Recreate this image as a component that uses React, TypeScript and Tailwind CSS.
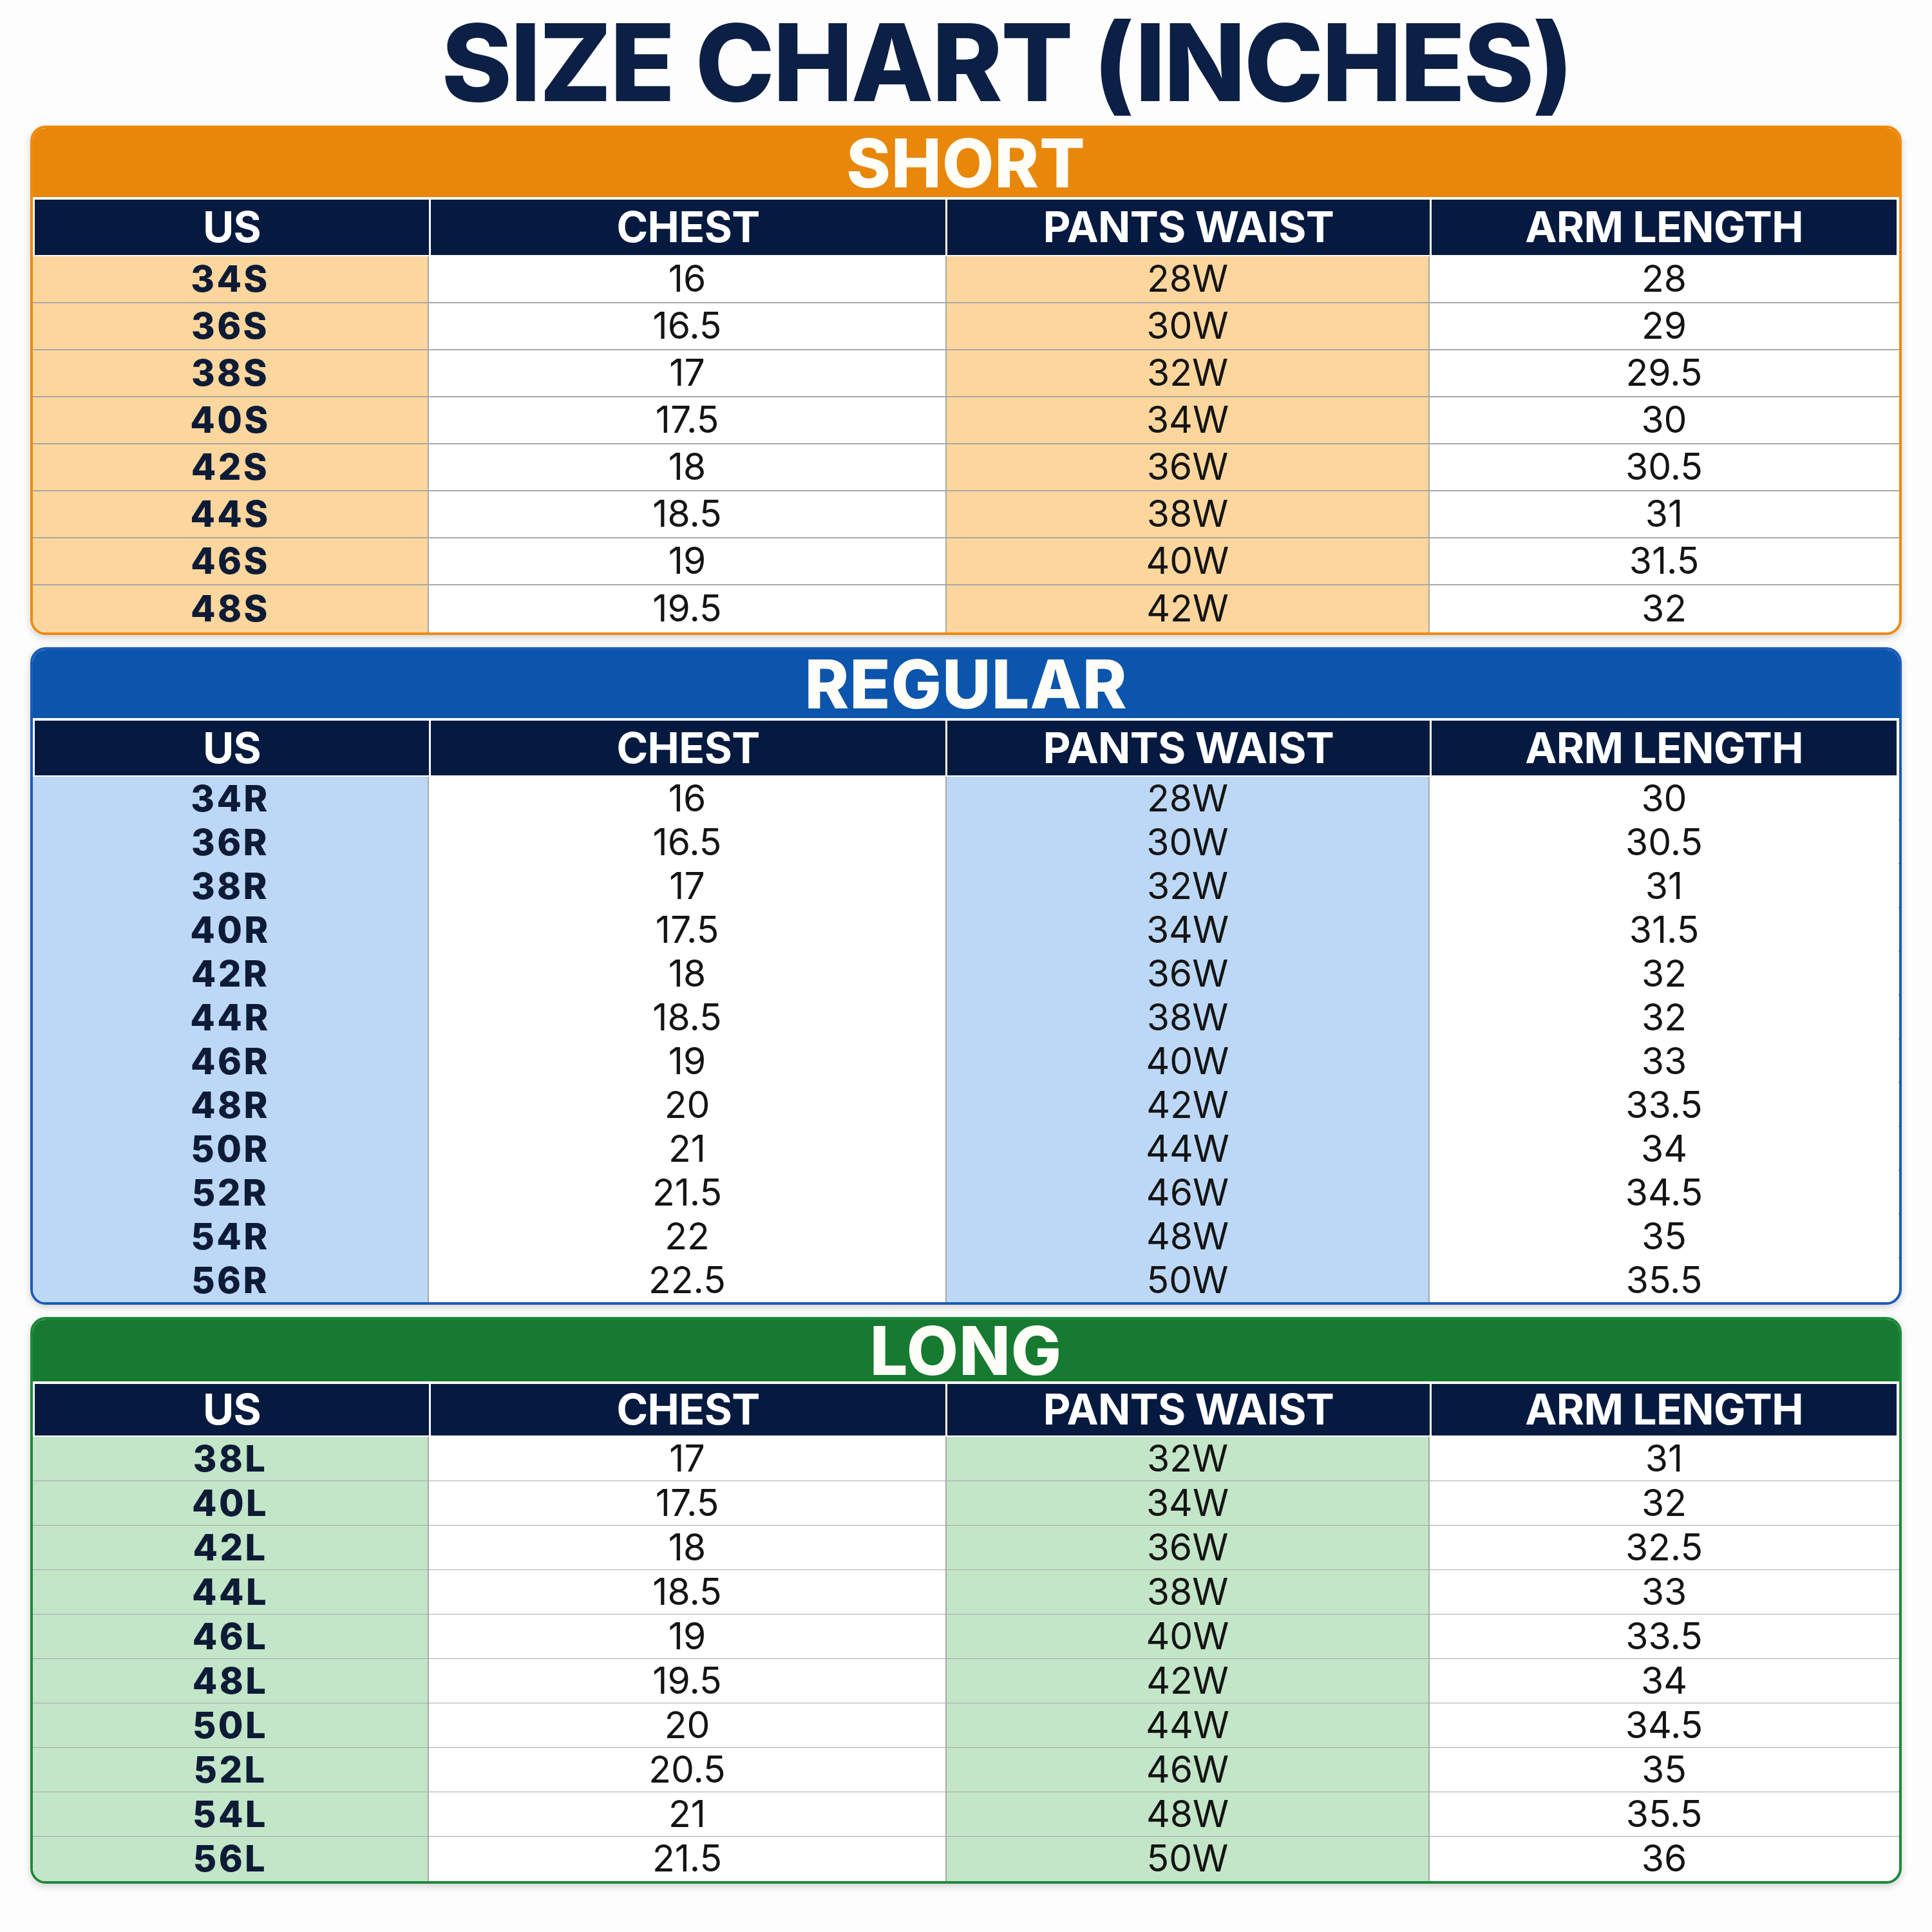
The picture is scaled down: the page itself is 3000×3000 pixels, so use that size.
import React from "react";

type Row = [string, string, string, string];

const sections = [
  {
    name: "SHORT",
    card: "border-[#ee8a0c]",
    band: "bg-[#e8870a] h-[107px]",
    tint: "bg-[#fdd69d]",
    headerH: "h-[86px]",
    rowH: "h-[73px]",
    rows: [
      ["34S", "16", "28W", "28"],
      ["36S", "16.5", "30W", "29"],
      ["38S", "17", "32W", "29.5"],
      ["40S", "17.5", "34W", "30"],
      ["42S", "18", "36W", "30.5"],
      ["44S", "18.5", "38W", "31"],
      ["46S", "19", "40W", "31.5"],
      ["48S", "19.5", "42W", "32"],
    ] as Row[],
  },
  {
    name: "REGULAR",
    card: "border-[#1a5cb8]",
    band: "bg-[#0c55ad] h-[106px]",
    tint: "bg-[#bcd8f6]",
    headerH: "h-[85px]",
    rowH: "h-[68px]",
    rows: [
      ["34R", "16", "28W", "30"],
      ["36R", "16.5", "30W", "30.5"],
      ["38R", "17", "32W", "31"],
      ["40R", "17.5", "34W", "31.5"],
      ["42R", "18", "36W", "32"],
      ["44R", "18.5", "38W", "32"],
      ["46R", "19", "40W", "33"],
      ["48R", "20", "42W", "33.5"],
      ["50R", "21", "44W", "34"],
      ["52R", "21.5", "46W", "34.5"],
      ["54R", "22", "48W", "35"],
      ["56R", "22.5", "50W", "35.5"],
    ] as Row[],
  },
  {
    name: "LONG",
    card: "border-[#1d8a3a]",
    band: "bg-[#167a31] h-[96px]",
    tint: "bg-[#c3e5c8]",
    headerH: "h-[80px]",
    rowH: "h-[69px]",
    rows: [
      ["38L", "17", "32W", "31"],
      ["40L", "17.5", "34W", "32"],
      ["42L", "18", "36W", "32.5"],
      ["44L", "18.5", "38W", "33"],
      ["46L", "19", "40W", "33.5"],
      ["48L", "19.5", "42W", "34"],
      ["50L", "20", "44W", "34.5"],
      ["52L", "20.5", "46W", "35"],
      ["54L", "21", "48W", "35.5"],
      ["56L", "21.5", "50W", "36"],
    ] as Row[],
  },
];

const cols = "grid grid-cols-[615px_802px_752px_728px]";
const headers = ["US", "CHEST", "PANTS WAIST", "ARM LENGTH"];

function Section({ s }: { s: (typeof sections)[number] }) {
  return (
    <section
      className={`rounded-[24px] border-[4px] bg-white shadow-[0_4px_12px_rgba(0,0,0,0.18)] ${s.card}`}
    >
      <div className={`flex items-center justify-center rounded-t-[20px] ${s.band}`}>
        <h2 className="my-[-13px] text-[104px] leading-[1.25] font-extrabold tracking-[0.01em] text-[#fffdf7]">
          {s.name}
        </h2>
      </div>
      <div className={`${cols} bg-white pt-[4px] pb-[2px]`}>
        {headers.map((h, i) => (
          <div
            key={h}
            className={`flex items-center justify-center border-l-[3px] border-white bg-[#061a40] bg-clip-padding text-[66px] leading-[1.2] font-bold tracking-[-0.01em] text-white ${s.headerH} ${i === 3 ? "border-r-[3px]" : ""}`}
          >
            {h}
          </div>
        ))}
      </div>
      <div>
        {s.rows.map((r, i) => {
          const last = i === s.rows.length - 1;
          return (
            <div
              key={r[0]}
              className={`${cols} ${s.rowH} ${last ? "" : "border-b-2 border-[#a8a8a8]"}`}
            >
              <div
                className={`flex items-center justify-center border-r-2 border-[#a8a8a8] text-[56px] leading-[1.2] font-extrabold tracking-[0.06em] text-[#0d1b36] ${s.tint} ${last ? "rounded-bl-[20px]" : ""}`}
              >
                {r[0]}
              </div>
              <div className="flex items-center justify-center bg-white text-[57px] leading-[1.2] text-[#141414]">
                {r[1]}
              </div>
              <div
                className={`flex items-center justify-center border-x-2 border-[#a8a8a8] text-[57px] leading-[1.2] text-[#141414] ${s.tint}`}
              >
                {r[2]}
              </div>
              <div
                className={`flex items-center justify-center bg-white text-[57px] leading-[1.2] text-[#141414] ${last ? "rounded-br-[20px]" : ""}`}
              >
                {r[3]}
              </div>
            </div>
          );
        })}
      </div>
    </section>
  );
}

export default function App() {
  return (
    <main className="h-[3000px] w-[3000px] bg-[#fdfdfd] px-[47px] font-['Inter',sans-serif]">
      <div className="h-[195px]">
        <h1 className="pl-[126px] text-center text-[166px] leading-[1.17] font-extrabold tracking-[-0.016em] text-[#0c1f45]">
          SIZE CHART (INCHES)
        </h1>
      </div>
      <div className="flex flex-col gap-[19px]">
        {sections.map((s) => (
          <Section key={s.name} s={s} />
        ))}
      </div>
    </main>
  );
}
